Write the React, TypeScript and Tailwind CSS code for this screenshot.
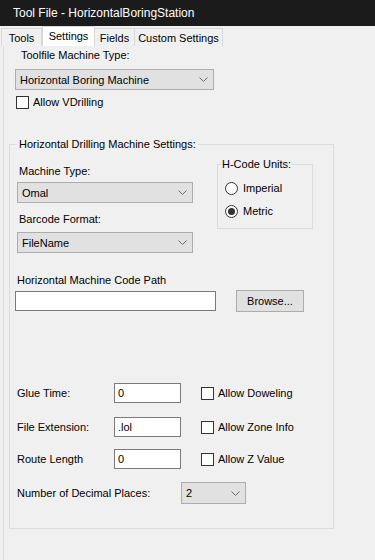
import React from "react";

const Chevron = () => (
  <svg width="9" height="5" viewBox="0 0 9 5" className="shrink-0">
    <polyline points="0.5,0.5 4.5,4.5 8.5,0.5" fill="none" stroke="#6b6b6b" strokeWidth="1" />
  </svg>
);

const Select = ({ value, className }: { value: string; className: string }) => (
  <div className={`flex items-center justify-between bg-[#e1e1e1] border border-[#adadad] pl-[4px] pr-[5px] ${className}`}>
    <span>{value}</span>
    <Chevron />
  </div>
);

const Checkbox = ({ label }: { label: string }) => (
  <div className="flex items-center">
    <div className="w-[13px] h-[13px] border border-[#333] bg-white shrink-0" />
    <span className="ml-[4px]">{label}</span>
  </div>
);

const Radio = ({ label, checked }: { label: string; checked?: boolean }) => (
  <div className="flex items-center h-[14px]">
    <div className="w-[13px] h-[13px] rounded-full border border-[#333] bg-white flex items-center justify-center shrink-0">
      {checked && <div className="w-[7px] h-[7px] rounded-full bg-[#333]" />}
    </div>
    <span className="ml-[5px]">{label}</span>
  </div>
);

const TextBox = ({ value, className }: { value?: string; className: string }) => (
  <div className={`bg-white border border-[#7a7a7a] flex items-center pl-[3px] ${className}`}>
    {value}
  </div>
);

export default function App() {
  return (
    <div
      className="w-[375px] h-[560px] bg-[#f0f0f0] text-black text-[11px] leading-[14px] overflow-hidden"
      style={{ fontFamily: '"Liberation Sans", Arial, sans-serif' }}
    >
      <div className="h-[26px] bg-[#1b1b1b] text-white text-[12px] flex items-center pl-[13px]">
        Tool File - HorizontalBoringStation
      </div>
      <div className="h-[20px] flex items-end pl-[1px]">
        <div className="w-[41px] h-[18px] border border-b-0 border-[#d9d9d9] flex items-center justify-center pt-[1px]">Tools</div>
        <div className="w-[53px] h-[20px] bg-white border border-b-0 border-[#d9d9d9] flex items-center justify-center pb-[1px]">Settings</div>
        <div className="w-[40px] h-[18px] border border-b-0 border-l-0 border-[#d9d9d9] flex items-center justify-center pt-[1px]">Fields</div>
        <div className="w-[88px] h-[18px] border border-b-0 border-l-0 border-[#d9d9d9] flex items-center justify-center pt-[1px]">Custom Settings</div>
      </div>
      <div className="ml-[3px] border-l border-[#dcdcdc] h-[514px] flex flex-col">
        <div className="ml-[17px] mt-[2px]">Toolfile Machine Type:</div>
        <Select value="Horizontal Boring Machine" className="ml-[11px] mt-[7px] w-[199px] h-[21px]" />
        <div className="ml-[12px] mt-[5px]">
          <Checkbox label="Allow VDrilling" />
        </div>
        <fieldset className="ml-[5px] mt-[28px] w-[325px] h-[392px] border border-[#dcdcdc]">
          <legend className="ml-[7px] px-[2px]">Horizontal Drilling Machine Settings:</legend>
          <div className="flex">
            <div className="ml-[7px] flex flex-col">
              <div className="mt-[13px] pl-[2px]">Machine Type:</div>
              <Select value="Omal" className="mt-[4px] w-[176px] h-[21px]" />
              <div className="mt-[9px] pl-[2px]">Barcode Format:</div>
              <Select value="FileName" className="mt-[6px] w-[176px] h-[21px]" />
            </div>
            <fieldset className="ml-[24px] mt-[6px] w-[96px] h-[72px] border border-[#dcdcdc]">
              <legend className="ml-[3px] px-[1px]">H-Code Units:</legend>
              <div className="ml-[7px] mt-[10px] flex flex-col gap-[9px]">
                <Radio label="Imperial" />
                <Radio label="Metric" checked />
              </div>
            </fieldset>
          </div>
          <div className="ml-[7px] mt-[20px]">Horizontal Machine Code Path</div>
          <div className="flex items-center h-[22px] mt-[3px]">
            <TextBox className="ml-[5px] w-[201px] h-[20px]" />
            <div className="ml-[20px] w-[68px] h-[22px] bg-[#e1e1e1] border border-[#adadad] flex items-center justify-center">
              Browse...
            </div>
          </div>
          <div className="flex items-center h-[20px] mt-[71px] ml-[7px]">
            <div className="w-[97px]">Glue Time:</div>
            <TextBox value="0" className="w-[67px] h-[20px]" />
            <div className="ml-[20px]"><Checkbox label="Allow Doweling" /></div>
          </div>
          <div className="flex items-center h-[20px] mt-[14px] ml-[7px]">
            <div className="w-[97px]">File Extension:</div>
            <TextBox value=".lol" className="w-[67px] h-[20px]" />
            <div className="ml-[20px]"><Checkbox label="Allow Zone Info" /></div>
          </div>
          <div className="flex items-center h-[20px] mt-[12px] ml-[7px]">
            <div className="w-[97px]">Route Length</div>
            <TextBox value="0" className="w-[67px] h-[20px]" />
            <div className="ml-[20px]"><Checkbox label="Allow Z Value" /></div>
          </div>
          <div className="flex items-center h-[22px] mt-[13px] ml-[7px]">
            <div className="w-[164px]">Number of Decimal Places:</div>
            <Select value="2" className="w-[65px] h-[22px]" />
          </div>
        </fieldset>
      </div>
    </div>
  );
}
